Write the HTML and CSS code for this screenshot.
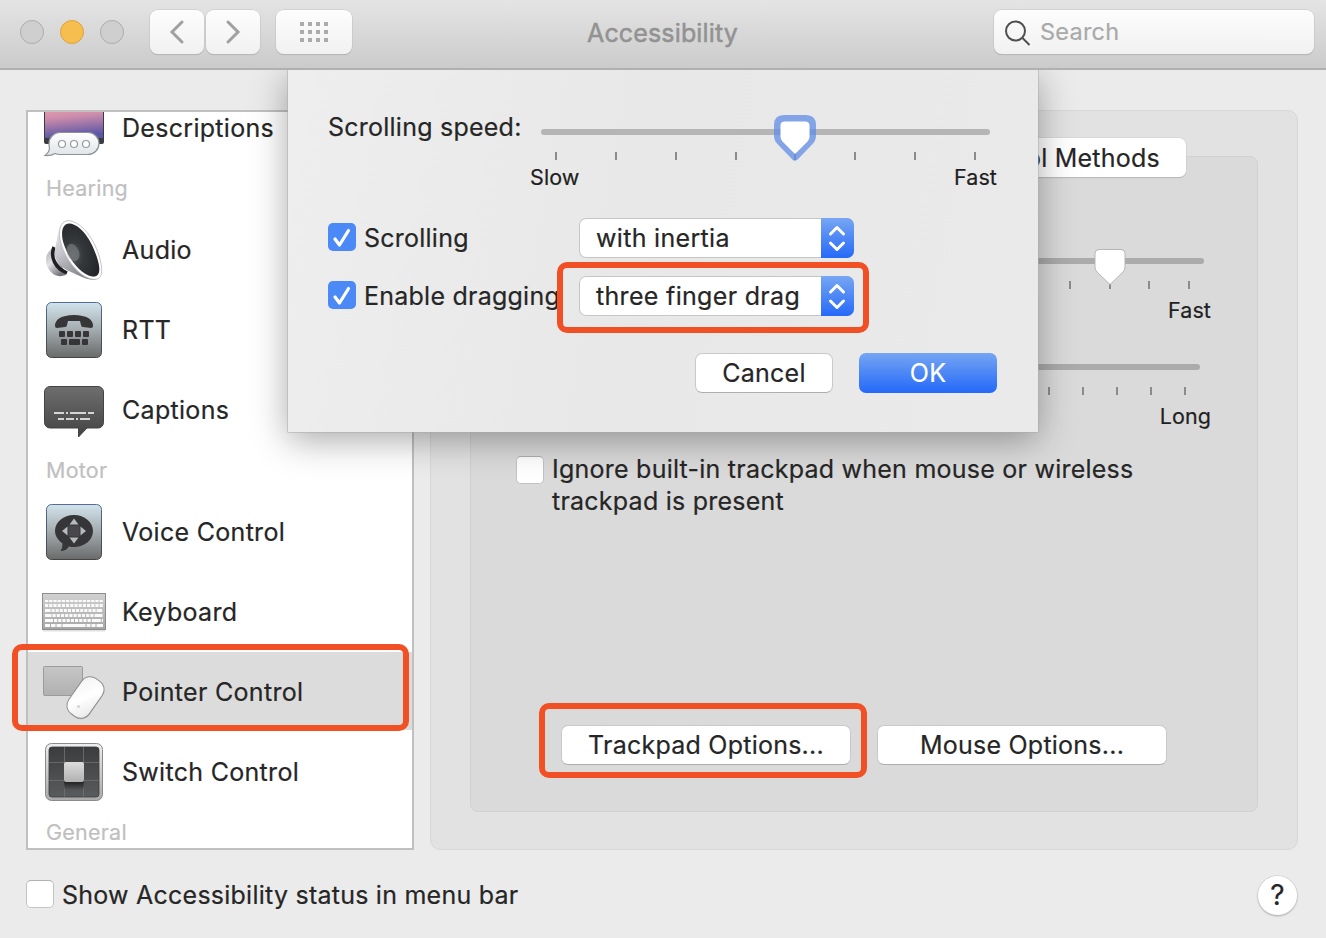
FILE: index.html
```html
<!DOCTYPE html>
<html lang="en">
<head>
<meta charset="utf-8">
<title>Accessibility</title>
<link rel="stylesheet" href="styles.css">
</head>
<body>
<div class="window">
  <header class="toolbar">
    <div class="lights"><span class="light"></span><span class="light light-min"></span><span class="light"></span></div>
    <div class="nav">
      <button class="tool"><svg width="16" height="26" viewBox="0 0 16 26"><path d="M13 3 3 13l10 10" class="chev"/></svg></button>
      <button class="tool"><svg width="16" height="26" viewBox="0 0 16 26"><path d="M3 3l10 10L3 23" class="chev"/></svg></button>
    </div>
    <button class="tool tool-grid"><svg width="28" height="20" viewBox="0 0 28 20"><path class="griddots" d="M0 2h4m4 0h4m4 0h4m4 0h4M0 10h4m4 0h4m4 0h4m4 0h4M0 18h4m4 0h4m4 0h4m4 0h4"/></svg></button>
    <h1 class="title">Accessibility</h1>
    <div class="search"><svg width="26" height="26" viewBox="0 0 26 26"><circle cx="10.500" cy="11" r="9.500"/><path d="M17.500 18l7 7"/></svg><span class="search-text">Search</span></div>
  </header>

  <main class="content">
    <nav class="list">
      <div class="list-inner">
        <div class="row">
          <svg class="icon" width="64" height="64" viewBox="0 0 64 64">
            <defs>
              <linearGradient id="sky" x1="0" y1="0" x2=".15" y2="1"><stop offset="0" stop-color="#f3a8a4"/><stop offset=".45" stop-color="#cf8dac"/><stop offset="1" stop-color="#5c57a5"/></linearGradient>
              <linearGradient id="bub" x1="0" y1="0" x2="0" y2="1"><stop offset="0" stop-color="#fff"/><stop offset="1" stop-color="#dfe4e8"/></linearGradient>
            </defs>
            <rect x="2" y="4" width="60" height="44" rx="2" fill="#3b3c42"/>
            <rect x="3" y="6" width="58" height="36" fill="url(#sky)"/>
            <path d="M18 36.500H46a11 11 0 0 1 0 22H18q-3 0-5-1q-4 2.500-10 2q4-3 4.500-7Q7 50 7 47.500a11 11 0 0 1 11-11z" fill="url(#bub)" stroke="#8d9297" stroke-width="1.200"/>
            <g fill="#fff" stroke="#94999d" stroke-width="1.200"><circle cx="20" cy="48" r="3.500"/><circle cx="32" cy="48" r="3.500"/><circle cx="44" cy="48" r="3.500"/></g>
          </svg><span class="label">Descriptions</span>
        </div>
        <div class="group">Hearing</div>
        <div class="row">
          <svg class="icon" width="64" height="64" viewBox="0 0 64 64">
            <defs>
              <linearGradient id="base" x1="0" y1="0" x2=".6" y2="1"><stop offset="0" stop-color="#a9a9b0"/><stop offset=".5" stop-color="#e2e2e7"/><stop offset="1" stop-color="#77777d"/></linearGradient>
              <linearGradient id="horn" x1="0" y1="0" x2=".5" y2="1"><stop offset="0" stop-color="#f4f4f6"/><stop offset=".5" stop-color="#c4c4ca"/><stop offset="1" stop-color="#85858c"/></linearGradient>
              <radialGradient id="cone" cx=".3" cy=".6" r=".7"><stop offset="0" stop-color="#55585b"/><stop offset=".4" stop-color="#35383b"/><stop offset="1" stop-color="#242629"/></radialGradient>
            </defs>
            <path d="M12 30C4 33 2 42 6 50c4 7 10 10 18 7z" fill="url(#base)"/>
            <path d="M12 29C8 39 13 50 25 55" fill="none" stroke="#202022" stroke-width="3.500"/>
            <path d="M22 3C15 10 16 20 13.500 28.500C11 41 17 49 29 54C37 57.500 44 62 54 62z" fill="url(#horn)"/>
            <path d="M27 2.500C18 2.500 15.500 13 19 25.500C23.500 41 37 60 52 61.500C60 62 61 54 58.500 43C55 27 43 5 27 2.500z" fill="#fdfdfe" stroke="#b7b7bc" stroke-width=".8"/>
            <path d="M28 5.500C20 5 18.500 15 21.500 25C26 40 38 56 50 58.500C58 59.500 58.500 52 56 43C52 28 42 8 28 5.500z" fill="url(#cone)"/>
            <ellipse cx="31" cy="34.500" rx="6" ry="9" transform="rotate(-22 31 34.500)" fill="#85898d" opacity=".55"/>
          </svg><span class="label">Audio</span>
        </div>
        <div class="row">
          <svg class="icon" width="64" height="64" viewBox="0 0 64 64">
            <defs><linearGradient id="tile" x1="0" y1="0" x2="0" y2="1"><stop offset="0" stop-color="#d2e3ec"/><stop offset=".5" stop-color="#a3abae"/><stop offset="1" stop-color="#6a6a6a"/></linearGradient>
            <linearGradient id="tileline" x1="0" y1="0" x2="0" y2="1"><stop offset="0" stop-color="#536d94"/><stop offset="1" stop-color="#444"/></linearGradient></defs>
            <rect x="4.500" y="4.500" width="55" height="55" rx="5" fill="url(#tile)" stroke="url(#tileline)"/>
            <path d="M13 28q0-10.500 19-11 19 .5 19 11 0 2-2 2l-8-1q-2 0-2-2l-1-4H26l-1 4q0 2-2 2l-8 1q-2 0-2-2z" fill="#363638"/>
            <g fill="#363638"><rect x="17" y="33" width="6" height="6" rx="1"/><rect x="25" y="33" width="6" height="6" rx="1"/><rect x="33" y="33" width="6" height="6" rx="1"/><rect x="41" y="33" width="6" height="6" rx="1"/><rect x="19" y="41" width="6" height="6" rx="1"/><rect x="27" y="41" width="11" height="6" rx="1"/><rect x="40" y="41" width="6" height="6" rx="1"/></g>
          </svg><span class="label">RTT</span>
        </div>
        <div class="row">
          <svg class="icon" width="64" height="64" viewBox="0 0 64 64">
            <defs><linearGradient id="cap" x1="0" y1="0" x2="0" y2="1"><stop offset="0" stop-color="#6e6e6e"/><stop offset="1" stop-color="#434343"/></linearGradient></defs>
            <path d="M8 6.500H56a5.500 5.500 0 0 1 5.500 5.500V42.500a5.500 5.500 0 0 1-5.500 5.500H45L36.500 57V48H8A5.500 5.500 0 0 1 2.500 42.500V12A5.500 5.500 0 0 1 8 6.500z" transform="translate(0 2)" fill="url(#cap)" stroke="#444"/>
            <path d="M12 35h10m2 0h2m2 0h16m2 0h6M16 41h6m2 0h8m2 0h2m2 0h10" stroke="#d5d5d5" stroke-width="2" fill="none"/>
          </svg><span class="label">Captions</span>
        </div>
        <div class="group">Motor</div>
        <div class="row">
          <svg class="icon" width="64" height="64" viewBox="0 0 64 64">
            <rect x="4.500" y="4.500" width="55" height="55" rx="5" fill="url(#tile)" stroke="url(#tileline)"/>
            <path d="M32 15c10.500 0 19 7 19 16s-8.500 16-19 16q-3 0-5-.6-3 4.600-8.500 4.600 2.200-3 2-7.500C16 40 13 36 13 31c0-9 8.500-16 19-16z" fill="#363638"/>
            <path d="M32 18.500l4.500 6h-9zM32 43.500l4.500-6h-9zM20 31l5.500-4.500v9zM44 31l-5.500-4.500v9z" fill="#b4babd"/>
            <rect x="26.500" y="25.500" width="11" height="11" fill="#48484a"/>
          </svg><span class="label">Voice Control</span>
        </div>
        <div class="row">
          <svg class="icon" width="64" height="64" viewBox="0 0 64 64">
            <defs><linearGradient id="kb" x1="0" y1="0" x2="0" y2="1"><stop offset="0" stop-color="#d2d2d2"/><stop offset="1" stop-color="#a6a6a6"/></linearGradient></defs>
            <rect x="1" y="15" width="62" height="36.500" fill="#000" opacity=".12"/>
            <rect x=".5" y="13.500" width="63" height="36" fill="url(#kb)" stroke="#8e8e8e"/>
            <g stroke="#fafafa" fill="none" stroke-width="3"><path stroke-width="2" stroke-dasharray="3.200 1" d="M3 21h58"/><path stroke-dasharray="3.200 1" d="M3 25.500h58"/><path d="M3 30.500h58" stroke-dasharray="5.500 1 3.100 1 3.100 1 3.100 1 3.100 1 3.100 1 3.100 1 3.100 1 3.100 1 3.100 1 3.100 1 3.100 1"/><path d="M3 35.500h58" stroke-dasharray="6.500 1 3.200 1 3.200 1 3.200 1 3.200 1 3.200 1 3.200 1 3.200 1 3.200 1 3.200 1 3.200 1 8 1"/><path d="M3 40.500h58" stroke-dasharray="8 1 3.200 1 3.200 1 3.200 1 3.200 1 3.200 1 3.200 1 3.200 1 3.200 1 3.200 1 9 1"/><path d="M3 45.500h58" stroke-dasharray="5 1 4.500 1 5 1 23 1 4 1 4 1 7 1"/></g>
          </svg><span class="label">Keyboard</span>
        </div>
        <div class="row row-selected">
          <svg class="icon" width="64" height="64" viewBox="0 0 64 64">
            <defs><linearGradient id="pad" x1="0" y1="0" x2="0" y2="1"><stop offset="0" stop-color="#c6c6c6"/><stop offset="1" stop-color="#b0b0b0"/></linearGradient>
            <linearGradient id="mouse" x1="0" y1="0" x2="1" y2="1"><stop offset="0" stop-color="#f3f3f3"/><stop offset=".5" stop-color="#fff"/><stop offset="1" stop-color="#e5e5e5"/></linearGradient></defs>
            <rect x="1.500" y="6.500" width="39" height="29" rx="1" fill="url(#pad)" stroke="#9b9b9b"/>
            <rect x="31" y="17" width="25" height="43" rx="10.500" transform="rotate(35 43.500 38.500)" fill="#000" opacity=".18"/>
            <rect x="31" y="16" width="25" height="43" rx="10" transform="rotate(35 43.500 37.500)" fill="url(#mouse)" stroke="#8f8f8f"/>
            <circle cx="36.500" cy="46.500" r="1.600" fill="#d5d5d5"/>
          </svg><span class="label">Pointer Control</span>
        </div>
        <div class="row">
          <svg class="icon" width="64" height="64" viewBox="0 0 64 64">
            <defs><linearGradient id="rim" x1="0" y1="0" x2="0" y2="1"><stop offset="0" stop-color="#eee"/><stop offset="1" stop-color="#a9a9a9"/></linearGradient>
            <linearGradient id="well" x1="0" y1="0" x2="0" y2="1"><stop offset="0" stop-color="#3b3c3e"/><stop offset="1" stop-color="#5a5b5d"/></linearGradient>
            <linearGradient id="key" x1="0" y1="0" x2="0" y2="1"><stop offset="0" stop-color="#dcdcdc"/><stop offset="1" stop-color="#b1b1b1"/></linearGradient>
            <linearGradient id="drop" x1="0" y1="0" x2="0" y2="1"><stop offset="0" stop-color="#111" stop-opacity=".9"/><stop offset="1" stop-color="#111" stop-opacity="0"/></linearGradient></defs>
            <rect x="3.500" y="3.500" width="57" height="57" rx="6" fill="url(#rim)" stroke="#8a8a8a"/>
            <rect x="7" y="7" width="50" height="50" rx="3" fill="url(#well)" stroke="#3a3a3a" stroke-width=".8"/>
            <path d="M22.500 7v50M41.500 7v50M7 22.500h50M7 40.500h50" stroke="#707174" stroke-width=".8"/>
            <rect x="22" y="40" width="20" height="10" fill="url(#drop)"/>
            <rect x="22" y="22" width="20" height="20" rx="2" fill="url(#key)"/>
          </svg><span class="label">Switch Control</span>
        </div>
        <div class="group">General</div>
      </div>
    </nav>

    <section class="panel">
      <div class="tabs"><button class="tab">Control Methods</button></div>
      <div class="pane">
        <div class="bg-slider">
          <svg width="440" height="44" viewBox="0 0 440 44"><path class="track" d="M38 15H430"/><path class="tick" d="M60 35v8M100 35v8M140 35v8M179 35v8M219 35v8M259 35v8M299 35v8M339 35v8M378 35v8M418 35v8"/><path class="thumb" d="M328 3.500h22q4 0 4 4v13.500q0 3-2 5L339 38.500l-13-12.500q-2-2-2-5V7.500q0-4 4-4z"/></svg>
          <span class="small">Fast</span>
        </div>
        <div class="bg-slider bg-slider-long">
          <svg width="440" height="44" viewBox="0 0 440 44"><path class="track" d="M38 15H426"/><path class="tick" d="M176 35v8M210 35v8M244 35v8M278 35v8M312 35v8M346 35v8M380 35v8M414 35v8"/></svg>
          <span class="small">Long</span>
        </div>
        <div class="ignore"><span class="box"></span><p class="ignore-text">Ignore built-in trackpad when mouse or wireless<br>trackpad is present</p></div>
        <div class="options"><button class="btn btn-wide">Trackpad Options...</button><button class="btn btn-wide">Mouse Options...</button></div>
      </div>
    </section>
  </main>

  <footer class="footer"><span class="box"></span><span class="footer-text">Show Accessibility status in menu bar</span><button class="help">?</button></footer>

  <div class="sheet-clip">
    <div class="sheet">
      <div class="speed">
        <span class="speed-label">Scrolling speed:</span>
        <div class="speed-slider">
          <svg width="468" height="55" viewBox="0 0 468 55"><path class="track" d="M15 24H458"/><path class="tick" d="M27 44v8M87 44v8M147 44v8M207 44v8M266 44v8M326 44v8M386 44v8M446 44v8"/><path class="halo" d="M255 11h22q6 0 6 6v11q0 3-3 6L266 48.500 252 34q-3-3-3-6V17q0-6 6-6z"/><path class="thumb thumb-focus" d="M256 13.500h20q4.500 0 4.500 4v11q0 3-2 5L266 46l-12.500-12.500q-2-2-2-5V17.500q0-4 4.500-4z"/></svg>
          <div class="ends"><span class="small slow">Slow</span><span class="small">Fast</span></div>
        </div>
      </div>
      <div class="option">
        <span class="box box-on"><svg width="28" height="28" viewBox="0 0 28 28"><path d="M7 16l4.500 6L20.500 7.500"/></svg></span><span class="option-label">Scrolling</span>
        <div class="select"><span class="value">with inertia</span><i class="arrows"><svg width="32" height="40" viewBox="0 0 32 40"><path d="M9.500 16 16 9.500l6.500 6.500M9.500 25l6.500 6.500 6.500-6.500"/></svg></i></div>
      </div>
      <div class="option">
        <span class="box box-on"><svg width="28" height="28" viewBox="0 0 28 28"><path d="M7 16l4.500 6L20.500 7.500"/></svg></span><span class="option-label">Enable dragging</span>
        <div class="select"><span class="value">three finger drag</span><i class="arrows"><svg width="32" height="40" viewBox="0 0 32 40"><path d="M9.500 16 16 9.500l6.500 6.500M9.500 25l6.500 6.500 6.500-6.500"/></svg></i></div>
      </div>
      <div class="actions"><button class="btn cancel">Cancel</button><button class="btn ok">OK</button></div>
    </div>
  </div>

  <div class="mark mark-list"></div>
  <div class="mark mark-drag"></div>
  <div class="mark mark-trackpad"></div>
</div>
</body>
</html>
```
FILE: styles.css
```css
* { box-sizing: border-box; }
body { margin: 0; font-family: Inter, "Liberation Sans", sans-serif; font-size: 25px; letter-spacing: .24px; color: #262626; -webkit-text-stroke: .2px; }
button { font: inherit; color: inherit; padding: 0; border: 0; letter-spacing: inherit; }
svg { display: block; flex: none; }
h1, p { margin: 0; }
.window { position: relative; width: 1326px; height: 938px; overflow: hidden; background: #ebebeb; display: flex; flex-direction: column; white-space: nowrap; }

.toolbar { height: 70px; flex: none; display: flex; align-items: flex-start; padding: 10px 12px 0 20px; background: linear-gradient(#e4e4e4, #cbcbcb); border-bottom: 2px solid #b0b0b0; }
.lights { display: flex; gap: 16px; padding-top: 10px; }
.light { width: 24px; height: 24px; border-radius: 50%; background: #cfcfcf; border: 1px solid #acacac; }
.light-min { background: #f6be4f; border-color: #dba33b; }
.nav { display: flex; gap: 2px; margin-left: 26px; }
.tool { width: 54px; height: 44px; border-radius: 8px; background: linear-gradient(#fdfdfd, #f1f1f1); box-shadow: 0 0 0 .5px #c4c4c4, 0 1px 1px #a8a8a8; display: flex; align-items: center; justify-content: center; }
.tool-grid { width: 76px; margin-left: 16px; }
.chev { fill: none; stroke: #a0a0a0; stroke-width: 3; stroke-linecap: round; }
.griddots { stroke: #aaa; stroke-width: 4; fill: none; }
.title { font-size: 25px; font-weight: 400; color: #929292; line-height: 46px; margin-left: 235px; width: 155px; letter-spacing: .15px; -webkit-text-stroke: .5px #929292; }
.search { margin-left: auto; width: 320px; height: 44px; border-radius: 8px; background: linear-gradient(#fdfdfd, #f1f1f1); box-shadow: 0 0 0 .5px #c4c4c4, 0 1px 1px #a8a8a8; display: flex; align-items: center; gap: 9px; padding-left: 11px; }
.search svg { fill: none; stroke: #4f4f4f; stroke-width: 2; margin-top: 1px; }
.search-text { font-size: 23.500px; color: #a9a9a9; margin-top: -1px; }

.content { display: flex; gap: 16px; padding: 40px 28px 0 26px; height: 780px; flex: none; }
.list { width: 388px; height: 740px; background: #fff; border: 2px solid #c0c0c0; overflow: hidden; flex: none; }
.list-inner { margin-top: -24px; }
.row { height: 80px; display: flex; align-items: center; gap: 16px; padding-left: 14px; }
.row-selected { height: 78px; margin-bottom: 2px; background: #dcdcdc; }
.row-selected .icon, .row-selected .label { margin-top: 2px; }
.label { letter-spacing: .3px; }
.group { height: 42px; line-height: 40px; padding-left: 18px; font-size: 21.500px; color: #c0c0c0; }

.panel { flex: 1; height: 740px; background: #e2e2e2; border: 1px solid #d8d8d8; border-radius: 10px; padding: 27px 39px 37px; display: flex; flex-direction: column; }
.tabs { display: flex; justify-content: flex-end; height: 18px; padding-right: 72px; }
.tab { position: relative; z-index: 1; height: 39px; width: 365px; padding-right: 26px; text-align: right; flex: none; background: #fff; border-radius: 7px; box-shadow: 0 0 0 .5px #cecece, 0 1px 1px #a5a5a5; }
.pane { flex: 1; background: #dadada; border: 1px solid #d1d1d1; border-radius: 8px; padding: 89px 46px 46px 45px; display: flex; flex-direction: column; }
.bg-slider { height: 106px; display: flex; flex-direction: column; align-items: flex-end; }
.bg-slider-long { height: 107px; }
.small { font-size: 21.500px; line-height: 26px; color: #1f1f1f; letter-spacing: .1px; }
.bg-slider .small { margin-top: 7px; }
.track { stroke: #ababab; stroke-width: 6; stroke-linecap: round; fill: none; }
.tick { stroke: #8b8b8b; stroke-width: 2; fill: none; }
.thumb { fill: #fff; stroke: #b5b5b5; stroke-width: 1; }
.ignore { display: flex; gap: 8px; margin-top: -6px; }
.ignore-text { line-height: 32px; }
.box { width: 28px; height: 28px; flex: none; background: #fff; border: 1px solid #c3c3c3; border-top-color: #b0b0b0; border-radius: 5px; }
.ignore .box { margin-top: 3px; }
.options { display: flex; gap: 26px; margin: auto 0 0 45px; }
.btn { height: 40px; border-radius: 7px; background: #fff; border: 1px solid #c9c9c9; border-bottom-color: #aeaeae; flex: none; }
.btn-wide { width: 290px; }

.footer { display: flex; align-items: center; gap: 8px; padding: 25px 29px 0 26px; height: 65px; }
.footer .box { margin-bottom: 2px; }
.help { width: 39px; height: 39px; margin-left: auto; border-radius: 50%; background: #fff; box-shadow: 0 0 0 .5px #cbcbcb, 0 1px 2px #999; font-size: 28px; }

.sheet-clip { position: absolute; z-index: 2; left: 238px; top: 70px; width: 850px; height: 422px; padding: 0 50px; overflow: hidden; }
.sheet { height: 362px; background: linear-gradient(100deg, #eee, #e8e8e8 45%, #eaeaea); box-shadow: 0 0 0 .5px #aaa, 0 8px 34px rgba(0, 0, 0, .34); display: flex; flex-direction: column; padding: 35px 41px 0 40px; }
.speed { display: flex; justify-content: space-between; height: 113px; }
.speed-label { line-height: 44px; }
.speed-slider { width: 468px; margin-top: 3px; }
.sheet .track { stroke: #b5b5b5; }
.halo { fill: none; stroke: #608ee5; stroke-opacity: .75; stroke-width: 8; stroke-linejoin: round; }
.thumb-focus { stroke: none; }
.ends { display: flex; justify-content: space-between; margin-top: 1px; }
.slow { margin-left: 1px; }
.option { display: flex; align-items: center; height: 40px; margin-bottom: 18px; }
.option .box { margin-bottom: 2px; }
.box-on { background: #4b8af6; border: 0; }
.box-on svg { fill: none; stroke: #fff; stroke-width: 3.200; stroke-linecap: round; stroke-linejoin: round; }
.option-label { width: 215px; margin-left: 8px; }
.select { width: 275px; height: 40px; display: flex; align-items: center; justify-content: space-between; padding-left: 17px; background: #fff; border-radius: 7px; box-shadow: inset 0 0 0 1px #c6c6c6; overflow: hidden; }
.value { letter-spacing: .32px; }
.arrows { width: 33px; height: 40px; background: linear-gradient(#77a6f3, #2569f8); }
.arrows svg { fill: none; stroke: #fff; stroke-width: 3; stroke-linecap: round; stroke-linejoin: round; }
.actions { display: flex; justify-content: flex-end; gap: 26px; margin-top: 19px; }
.actions .btn { width: 138px; }
.actions .ok { background: linear-gradient(#75a5f3, #2469f8); border: 0; color: #fff; }

.mark { position: absolute; z-index: 3; border: 6px solid #f05023; border-radius: 10px; }
.mark-list { left: 12px; top: 644px; width: 397px; height: 87px; }
.mark-drag { left: 557px; top: 262px; width: 312px; height: 71px; }
.mark-trackpad { left: 539px; top: 703px; width: 328px; height: 75px; }
```
